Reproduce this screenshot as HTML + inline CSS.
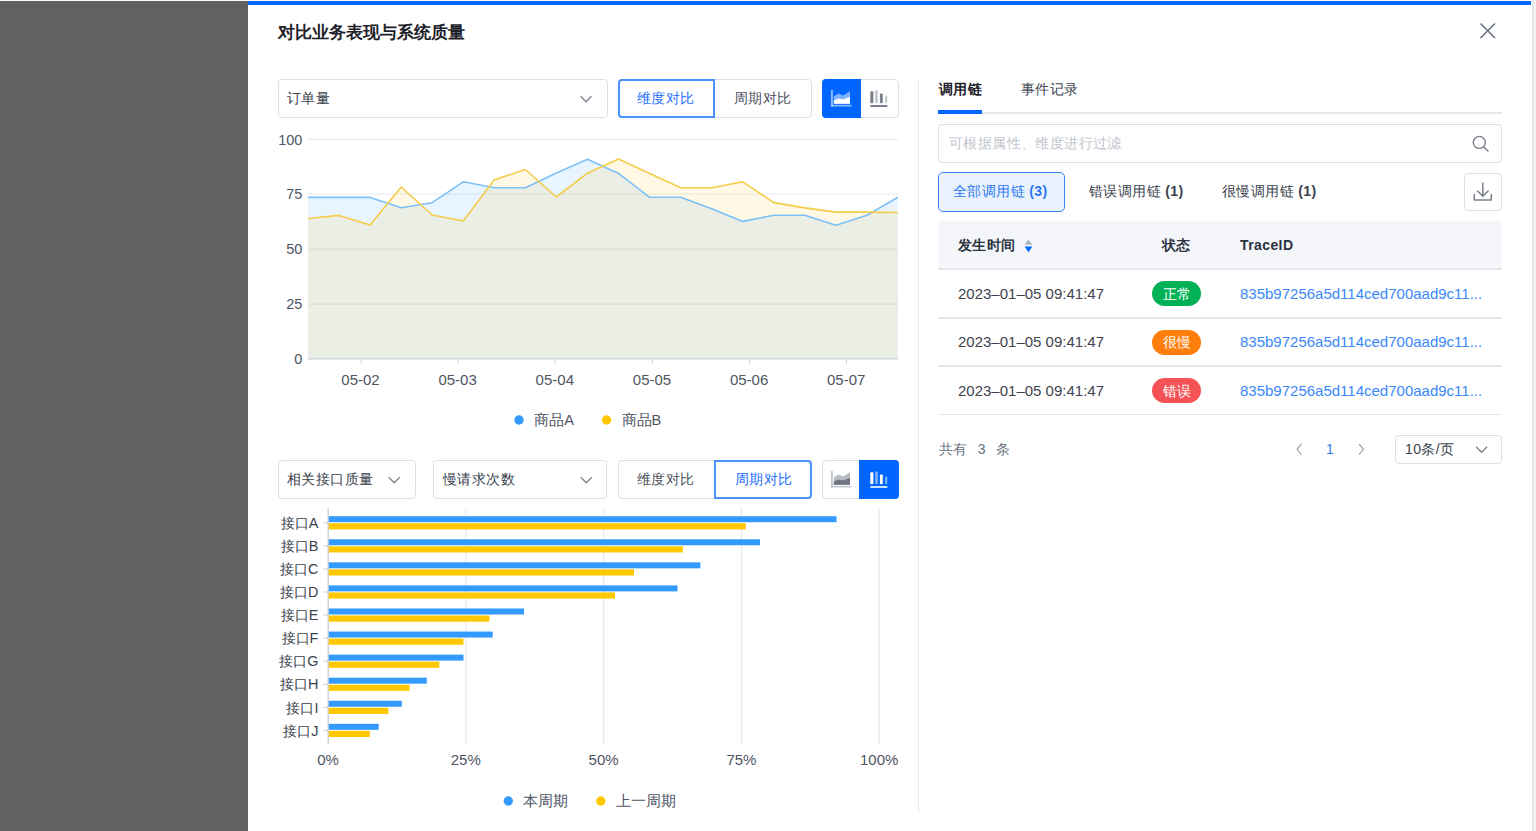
<!DOCTYPE html>
<html><head><meta charset="utf-8">
<style>
html,body{margin:0;padding:0;}
body{width:1536px;height:831px;overflow:hidden;position:relative;background:#fff;font-family:"Liberation Sans",sans-serif;color:#3a414d;}
.a{position:absolute;}
.t{position:absolute;white-space:nowrap;line-height:1;}
.box{position:absolute;box-sizing:border-box;border:1px solid #dcdfe6;border-radius:4px;background:#fff;}
svg{position:absolute;left:0;top:0;}
</style></head><body>
<div class="a" style="left:0;top:1px;width:248px;height:830px;background:#616163"></div>
<div class="a" style="left:248px;top:1px;width:1283px;height:4px;background:#0066ff"></div>
<div class="a" style="left:1532px;top:0;width:2px;height:831px;background:#e6e6e6"></div>
<div class="a" style="left:1534px;top:0;width:2px;height:831px;background:#f4f4f4"></div>

<!-- title -->
<div class="t" style="left:278px;top:23.5px;font-size:17px;font-weight:bold;color:#1d2129">对比业务表现与系统质量</div>
<!-- close -->
<svg width="1536" height="831" style="pointer-events:none">
  <path d="M1480.5 23.5 L1495 38 M1495 23.5 L1480.5 38" stroke="#6b7280" stroke-width="1.6" fill="none"/>
</svg>

<!-- ===== top-left controls ===== -->
<div class="box" style="left:278px;top:79px;width:330px;height:39px;"></div>
<div class="t" style="left:287px;top:91px;font-size:14px;letter-spacing:0.4px;color:#3a414d">订单量</div>

<div class="box" style="left:618px;top:79px;width:194px;height:39px;"></div>
<div class="a" style="left:617.5px;top:79px;width:97.5px;height:39px;box-sizing:border-box;border:2px solid #4d90f9;border-radius:4px 0 0 4px"></div>
<div class="t" style="left:637px;top:91px;font-size:14px;letter-spacing:0.4px;color:#1a6dff">维度对比</div>
<div class="t" style="left:734px;top:91px;font-size:14px;letter-spacing:0.4px;color:#4b505a">周期对比</div>

<div class="box" style="left:822px;top:79px;width:77px;height:39px;"></div>
<div class="a" style="left:822px;top:79px;width:39px;height:39px;background:#0066ff;border-radius:4px 0 0 4px"></div>

<div class="a" style="left:918px;top:79px;width:1px;height:733px;background:#e5e7eb"></div>

<!-- ===== bottom-left controls ===== -->
<div class="box" style="left:278px;top:460px;width:138px;height:39px;"></div>
<div class="t" style="left:287px;top:472px;font-size:14px;letter-spacing:0.4px;color:#3a414d">相关接口质量</div>
<div class="box" style="left:433px;top:460px;width:174px;height:39px;"></div>
<div class="t" style="left:443px;top:472px;font-size:14px;letter-spacing:0.4px;color:#3a414d">慢请求次数</div>

<div class="box" style="left:618px;top:460px;width:194px;height:39px;"></div>
<div class="a" style="left:714px;top:460px;width:98px;height:39px;box-sizing:border-box;border:2px solid #4d90f9;border-radius:0 4px 4px 0"></div>
<div class="t" style="left:637px;top:472px;font-size:14px;letter-spacing:0.4px;color:#4b505a">维度对比</div>
<div class="t" style="left:735px;top:472px;font-size:14px;letter-spacing:0.4px;color:#1a6dff">周期对比</div>

<div class="box" style="left:822px;top:460px;width:77px;height:39px;"></div>
<div class="a" style="left:859px;top:460px;width:40px;height:39px;background:#0066ff;border-radius:0 4px 4px 0"></div>

<!-- ===== right panel ===== -->
<div class="t" style="left:939px;top:82px;font-size:14px;letter-spacing:0.4px;font-weight:bold;color:#1d2129">调用链</div>
<div class="t" style="left:1021px;top:82px;font-size:14px;letter-spacing:0.4px;color:#3a414d">事件记录</div>
<div class="a" style="left:938px;top:112px;width:564px;height:2px;background:#e5e7eb"></div>
<div class="a" style="left:938px;top:110px;width:44px;height:4px;background:#0066ff"></div>

<div class="box" style="left:938px;top:124px;width:564px;height:39px;"></div>
<div class="t" style="left:949px;top:136px;font-size:14px;letter-spacing:0.4px;color:#c0c4cc">可根据属性、维度进行过滤</div>

<div class="a" style="left:938px;top:172px;width:127px;height:40px;box-sizing:border-box;border:1.5px solid #3a86f7;border-radius:5px;background:#eaf2fe"></div>
<div class="t" style="left:953px;top:184px;font-size:14px;letter-spacing:0.4px;color:#2a77f2">全部调用链 <b>(3)</b></div>
<div class="t" style="left:1089px;top:184px;font-size:14px;letter-spacing:0.4px;color:#3a414d">错误调用链 <b>(1)</b></div>
<div class="t" style="left:1222px;top:184px;font-size:14px;letter-spacing:0.4px;color:#3a414d">很慢调用链 <b>(1)</b></div>
<div class="box" style="left:1464px;top:173px;width:38px;height:38px;"></div>

<div class="a" style="left:938px;top:221px;width:564px;height:48px;background:#f4f6fa"></div>
<div class="a" style="left:938px;top:268px;width:564px;height:2px;background:#e5e7eb"></div>
<div class="t" style="left:958px;top:238px;font-size:14px;letter-spacing:0.4px;font-weight:bold;color:#2b3340">发生时间</div>
<div class="t" style="left:1162px;top:238px;font-size:14px;letter-spacing:0.4px;font-weight:bold;color:#2b3340">状态</div>
<div class="t" style="left:1240px;top:238px;font-size:14px;letter-spacing:0.4px;font-weight:bold;color:#2b3340">TraceID</div>

<div class="a" style="left:938px;top:316.9px;width:564px;height:1.8px;background:#e5e7eb"></div>
<div class="a" style="left:938px;top:365.2px;width:564px;height:1.8px;background:#e5e7eb"></div>
<div class="a" style="left:938px;top:413.6px;width:564px;height:1.8px;background:#e5e7eb"></div>

<div class="t" style="left:958px;top:286px;font-size:15px;color:#3d4450">2023–01–05 09:41:47</div>
<div class="t" style="left:958px;top:334px;font-size:15px;color:#3d4450">2023–01–05 09:41:47</div>
<div class="t" style="left:958px;top:383px;font-size:15px;color:#3d4450">2023–01–05 09:41:47</div>

<div class="a" style="left:1152px;top:281px;width:49px;height:25px;border-radius:13px;background:#00b255"></div>
<div class="a" style="left:1152px;top:330px;width:49px;height:25px;border-radius:13px;background:#ff7d0a"></div>
<div class="a" style="left:1152px;top:378px;width:49px;height:25px;border-radius:13px;background:#f55256"></div>
<div class="t" style="left:1163px;top:287px;font-size:14px;letter-spacing:0.4px;color:#fff">正常</div>
<div class="t" style="left:1163px;top:335px;font-size:14px;letter-spacing:0.4px;color:#fff">很慢</div>
<div class="t" style="left:1163px;top:384px;font-size:14px;letter-spacing:0.4px;color:#fff">错误</div>

<div class="t" style="left:1240px;top:286px;font-size:15px;color:#3a88fc">835b97256a5d114ced700aad9c11...</div>
<div class="t" style="left:1240px;top:334px;font-size:15px;color:#3a88fc">835b97256a5d114ced700aad9c11...</div>
<div class="t" style="left:1240px;top:383px;font-size:15px;color:#3a88fc">835b97256a5d114ced700aad9c11...</div>

<div class="t" style="left:939px;top:442px;font-size:14px;letter-spacing:0.4px;color:#6b7280">共有<span style="margin:0 9.5px 0 10px">3</span>条</div>
<div class="t" style="left:1326px;top:442px;font-size:14px;letter-spacing:0.4px;color:#2f7bf5">1</div>
<div class="box" style="left:1395px;top:435px;width:107px;height:29px;"></div>
<div class="t" style="left:1405px;top:442px;font-size:14px;letter-spacing:0.4px;color:#3a414d">10条/页</div>

<!-- ===== charts & icons SVG ===== -->
<svg id="charts" width="1536" height="831" font-family="Liberation Sans, sans-serif"><line x1="308" y1="139.3" x2="898" y2="139.3" stroke="#e8eaee" stroke-width="1.2"/>
<line x1="308" y1="194.0" x2="898" y2="194.0" stroke="#e8eaee" stroke-width="1.2"/>
<line x1="308" y1="249.0" x2="898" y2="249.0" stroke="#e8eaee" stroke-width="1.2"/>
<line x1="308" y1="304.1" x2="898" y2="304.1" stroke="#e8eaee" stroke-width="1.2"/>
<polygon points="308,358.8 308.0,197.4 339.1,197.4 370.1,197.4 401.2,207.7 432.2,202.7 463.3,181.8 494.3,187.8 525.4,187.8 556.4,173.0 587.5,159.2 618.5,173.4 649.6,197.3 680.6,197.3 711.7,208.7 742.7,221.4 773.8,215.3 804.8,215.3 835.9,225.2 866.9,215.3 898.0,197.3 898,358.8" fill="rgba(140,200,250,0.2)"/>
<polygon points="308,358.8 308.0,218.5 339.1,215.4 370.1,225.1 401.2,187.0 432.2,215.0 463.3,221.0 494.3,179.8 525.4,169.5 556.4,197.0 587.5,173.2 618.5,159.0 649.6,173.4 680.6,187.8 711.7,187.8 742.7,181.8 773.8,202.6 804.8,207.9 835.9,212.1 866.9,212.1 898.0,212.5 898,358.8" fill="rgba(245,205,70,0.14)"/>
<polyline points="308.0,197.4 339.1,197.4 370.1,197.4 401.2,207.7 432.2,202.7 463.3,181.8 494.3,187.8 525.4,187.8 556.4,173.0 587.5,159.2 618.5,173.4 649.6,197.3 680.6,197.3 711.7,208.7 742.7,221.4 773.8,215.3 804.8,215.3 835.9,225.2 866.9,215.3 898.0,197.3" fill="none" stroke="#7cc0f8" stroke-width="1.6" stroke-linejoin="round"/>
<polyline points="308.0,218.5 339.1,215.4 370.1,225.1 401.2,187.0 432.2,215.0 463.3,221.0 494.3,179.8 525.4,169.5 556.4,197.0 587.5,173.2 618.5,159.0 649.6,173.4 680.6,187.8 711.7,187.8 742.7,181.8 773.8,202.6 804.8,207.9 835.9,212.1 866.9,212.1 898.0,212.5" fill="none" stroke="#f5cc4a" stroke-width="1.6" stroke-linejoin="round"/>
<line x1="308" y1="358.9" x2="898" y2="358.9" stroke="#c8ced8" stroke-width="1.2"/>
<line x1="361.1" y1="359.5" x2="361.1" y2="363.5" stroke="#c8ced8" stroke-width="1"/>
<line x1="458.2" y1="359.5" x2="458.2" y2="363.5" stroke="#c8ced8" stroke-width="1"/>
<line x1="555.3" y1="359.5" x2="555.3" y2="363.5" stroke="#c8ced8" stroke-width="1"/>
<line x1="652.4" y1="359.5" x2="652.4" y2="363.5" stroke="#c8ced8" stroke-width="1"/>
<line x1="749.5" y1="359.5" x2="749.5" y2="363.5" stroke="#c8ced8" stroke-width="1"/>
<line x1="846.6" y1="359.5" x2="846.6" y2="363.5" stroke="#c8ced8" stroke-width="1"/>
<text x="302.4" y="144.5" text-anchor="end" font-size="14.5" fill="#4e5563">100</text>
<text x="302.4" y="199.2" text-anchor="end" font-size="14.5" fill="#4e5563">75</text>
<text x="302.4" y="254.2" text-anchor="end" font-size="14.5" fill="#4e5563">50</text>
<text x="302.4" y="309.3" text-anchor="end" font-size="14.5" fill="#4e5563">25</text>
<text x="302.4" y="364.09999999999997" text-anchor="end" font-size="14.5" fill="#4e5563">0</text>
<text x="360.5" y="385.3" text-anchor="middle" font-size="15" fill="#4e5563">05-02</text>
<text x="457.6" y="385.3" text-anchor="middle" font-size="15" fill="#4e5563">05-03</text>
<text x="554.8" y="385.3" text-anchor="middle" font-size="15" fill="#4e5563">05-04</text>
<text x="652.0" y="385.3" text-anchor="middle" font-size="15" fill="#4e5563">05-05</text>
<text x="749.1" y="385.3" text-anchor="middle" font-size="15" fill="#4e5563">05-06</text>
<text x="846.2" y="385.3" text-anchor="middle" font-size="15" fill="#4e5563">05-07</text>
<circle cx="519" cy="420" r="4.7" fill="#339bff"/>
<text x="534.3" y="424.8" font-size="14.6" fill="#4e5563">商品A</text>
<circle cx="606.5" cy="420" r="4.7" fill="#ffc800"/>
<text x="621.6" y="424.8" font-size="14.6" fill="#4e5563">商品B</text>
<line x1="465.8" y1="508.5" x2="465.8" y2="744" stroke="#e6e8ee" stroke-width="1.2"/>
<line x1="603.6" y1="508.5" x2="603.6" y2="744" stroke="#e6e8ee" stroke-width="1.2"/>
<line x1="741.4000000000001" y1="508.5" x2="741.4000000000001" y2="744" stroke="#e6e8ee" stroke-width="1.2"/>
<line x1="879.2" y1="508.5" x2="879.2" y2="744" stroke="#e6e8ee" stroke-width="1.2"/>
<line x1="328.2" y1="508.5" x2="328.2" y2="744" stroke="#c8ced8" stroke-width="1.4"/>
<rect x="328.8" y="516.20" width="507.7" height="6" fill="#339bff"/>
<rect x="328.8" y="523.20" width="417.0" height="6.2" fill="#ffc800"/>
<line x1="323.5" y1="522.80" x2="328" y2="522.80" stroke="#c8ced8" stroke-width="1"/>
<text x="318.4" y="528.00" text-anchor="end" font-size="14.4" fill="#3a414d">接口A</text>
<rect x="328.8" y="539.27" width="431.2" height="6" fill="#339bff"/>
<rect x="328.8" y="546.27" width="354.1" height="6.2" fill="#ffc800"/>
<line x1="323.5" y1="545.87" x2="328" y2="545.87" stroke="#c8ced8" stroke-width="1"/>
<text x="318.4" y="551.07" text-anchor="end" font-size="14.4" fill="#3a414d">接口B</text>
<rect x="328.8" y="562.34" width="371.6" height="6" fill="#339bff"/>
<rect x="328.8" y="569.34" width="305.2" height="6.2" fill="#ffc800"/>
<line x1="323.5" y1="568.94" x2="328" y2="568.94" stroke="#c8ced8" stroke-width="1"/>
<text x="318.4" y="574.14" text-anchor="end" font-size="14.4" fill="#3a414d">接口C</text>
<rect x="328.8" y="585.41" width="348.7" height="6" fill="#339bff"/>
<rect x="328.8" y="592.41" width="286.2" height="6.2" fill="#ffc800"/>
<line x1="323.5" y1="592.01" x2="328" y2="592.01" stroke="#c8ced8" stroke-width="1"/>
<text x="318.4" y="597.21" text-anchor="end" font-size="14.4" fill="#3a414d">接口D</text>
<rect x="328.8" y="608.48" width="195.2" height="6" fill="#339bff"/>
<rect x="328.8" y="615.48" width="160.6" height="6.2" fill="#ffc800"/>
<line x1="323.5" y1="615.08" x2="328" y2="615.08" stroke="#c8ced8" stroke-width="1"/>
<text x="318.4" y="620.28" text-anchor="end" font-size="14.4" fill="#3a414d">接口E</text>
<rect x="328.8" y="631.55" width="163.9" height="6" fill="#339bff"/>
<rect x="328.8" y="638.55" width="134.7" height="6.2" fill="#ffc800"/>
<line x1="323.5" y1="638.15" x2="328" y2="638.15" stroke="#c8ced8" stroke-width="1"/>
<text x="318.4" y="643.35" text-anchor="end" font-size="14.4" fill="#3a414d">接口F</text>
<rect x="328.8" y="654.62" width="134.7" height="6" fill="#339bff"/>
<rect x="328.8" y="661.62" width="110.5" height="6.2" fill="#ffc800"/>
<line x1="323.5" y1="661.22" x2="328" y2="661.22" stroke="#c8ced8" stroke-width="1"/>
<text x="318.4" y="666.42" text-anchor="end" font-size="14.4" fill="#3a414d">接口G</text>
<rect x="328.8" y="677.69" width="98.0" height="6" fill="#339bff"/>
<rect x="328.8" y="684.69" width="80.8" height="6.2" fill="#ffc800"/>
<line x1="323.5" y1="684.29" x2="328" y2="684.29" stroke="#c8ced8" stroke-width="1"/>
<text x="318.4" y="689.49" text-anchor="end" font-size="14.4" fill="#3a414d">接口H</text>
<rect x="328.8" y="700.76" width="73.0" height="6" fill="#339bff"/>
<rect x="328.8" y="707.76" width="59.6" height="6.2" fill="#ffc800"/>
<line x1="323.5" y1="707.36" x2="328" y2="707.36" stroke="#c8ced8" stroke-width="1"/>
<text x="318.4" y="712.56" text-anchor="end" font-size="14.4" fill="#3a414d">接口I</text>
<rect x="328.8" y="723.83" width="49.9" height="6" fill="#339bff"/>
<rect x="328.8" y="730.83" width="41.0" height="6.2" fill="#ffc800"/>
<line x1="323.5" y1="730.43" x2="328" y2="730.43" stroke="#c8ced8" stroke-width="1"/>
<text x="318.4" y="735.63" text-anchor="end" font-size="14.4" fill="#3a414d">接口J</text>
<text x="328.0" y="764.8" text-anchor="middle" font-size="15" fill="#4e5563">0%</text>
<text x="465.8" y="764.8" text-anchor="middle" font-size="15" fill="#4e5563">25%</text>
<text x="603.6" y="764.8" text-anchor="middle" font-size="15" fill="#4e5563">50%</text>
<text x="741.4000000000001" y="764.8" text-anchor="middle" font-size="15" fill="#4e5563">75%</text>
<text x="879.2" y="764.8" text-anchor="middle" font-size="15" fill="#4e5563">100%</text>
<circle cx="508.3" cy="801" r="4.7" fill="#339bff"/>
<text x="522.7" y="805.5" font-size="14.6" fill="#4e5563">本周期</text>
<circle cx="600.8" cy="801" r="4.7" fill="#ffc800"/>
<text x="616.3" y="805.5" font-size="14.6" fill="#4e5563">上一周期</text>
<g transform="translate(0,0)"><rect x="830.9" y="90" width="2" height="16.4" fill="rgba(255,255,255,0.55)"/><rect x="830.9" y="104.8" width="20.4" height="1.7" fill="rgba(255,255,255,0.55)"/><polygon points="833.8,96.2 838.5,93.4 843.2,95.4 850,91.3 850,103.8 833.8,103.8" fill="rgba(255,255,255,0.5)"/><polygon points="833.8,100.4 838.5,98.6 843.2,99.6 850,96.75 850,103.8 833.8,103.8" fill="#ffffff"/></g>
<g transform="translate(0,0)"><rect x="870.3" y="91.3" width="3.1" height="12" rx="1" fill="#7a808b"/><rect x="875.2" y="90.2" width="2.6" height="13.1" rx="1" fill="#c2c6cc"/><rect x="879.9" y="93.6" width="2.9" height="9.7" rx="1" fill="#7a808b"/><rect x="885.1" y="95.4" width="2.1" height="7.9" rx="1" fill="#c2c6cc"/><rect x="870.3" y="105" width="17.1" height="1.9" rx="0.5" fill="#7a808b"/></g>
<g transform="translate(0,381)"><rect x="830.9" y="90" width="2" height="16.4" fill="#c4c8cf"/><rect x="830.9" y="104.8" width="20.4" height="1.7" fill="#c4c8cf"/><polygon points="833.8,96.2 838.5,93.4 843.2,95.4 850,91.3 850,103.8 833.8,103.8" fill="#b8bcc3"/><polygon points="833.8,100.4 838.5,98.6 843.2,99.6 850,96.75 850,103.8 833.8,103.8" fill="#6e7480"/></g>
<g transform="translate(0,381)"><rect x="870.3" y="91.3" width="3.1" height="12" rx="1" fill="#ffffff"/><rect x="875.2" y="90.2" width="2.6" height="13.1" rx="1" fill="rgba(255,255,255,0.5)"/><rect x="879.9" y="93.6" width="2.9" height="9.7" rx="1" fill="#ffffff"/><rect x="885.1" y="95.4" width="2.1" height="7.9" rx="1" fill="rgba(255,255,255,0.5)"/><rect x="870.3" y="105" width="17.1" height="1.9" rx="0.5" fill="rgba(255,255,255,0.8)"/></g>
<path d="M580.5 96.2 L586 101.8 L591.5 96.2" fill="none" stroke="#7d838e" stroke-width="1.3"/>
<path d="M388.7 477.2 L394.2 482.8 L399.7 477.2" fill="none" stroke="#7d838e" stroke-width="1.3"/>
<path d="M580.8 477.2 L586.3 482.8 L591.8 477.2" fill="none" stroke="#7d838e" stroke-width="1.3"/>
<path d="M1476.1 446.7 L1481.6 452.3 L1487.1 446.7" fill="none" stroke="#7d838e" stroke-width="1.3"/>
<circle cx="1479.3" cy="142.4" r="6" fill="none" stroke="#7a808b" stroke-width="1.4"/>
<path d="M1483.6 146.8 L1488 151" stroke="#7a808b" stroke-width="1.5" stroke-linecap="round"/>
<path d="M1482.8 183 V196 M1477.5 191 L1482.8 196.2 L1488.1 191" fill="none" stroke="#7a808b" stroke-width="1.5" stroke-linecap="round"/>
<path d="M1474.3 194.5 V200 H1491.3 V194.5" fill="none" stroke="#7a808b" stroke-width="1.5" stroke-linecap="round" stroke-linejoin="round"/>
<path d="M1024.6 244.8 L1028.5 239.2 L1032.4 244.8 Z" fill="#aeb4bf"/>
<path d="M1024.6 246.6 L1028.5 252.2 L1032.4 246.6 Z" fill="#0066ff"/>
<path d="M1301.5 444 L1297 449.3 L1301.5 454.6" fill="none" stroke="#a0a5ae" stroke-width="1.2"/>
<path d="M1359 444 L1363.5 449.3 L1359 454.6" fill="none" stroke="#a0a5ae" stroke-width="1.2"/></svg>

</body></html>
